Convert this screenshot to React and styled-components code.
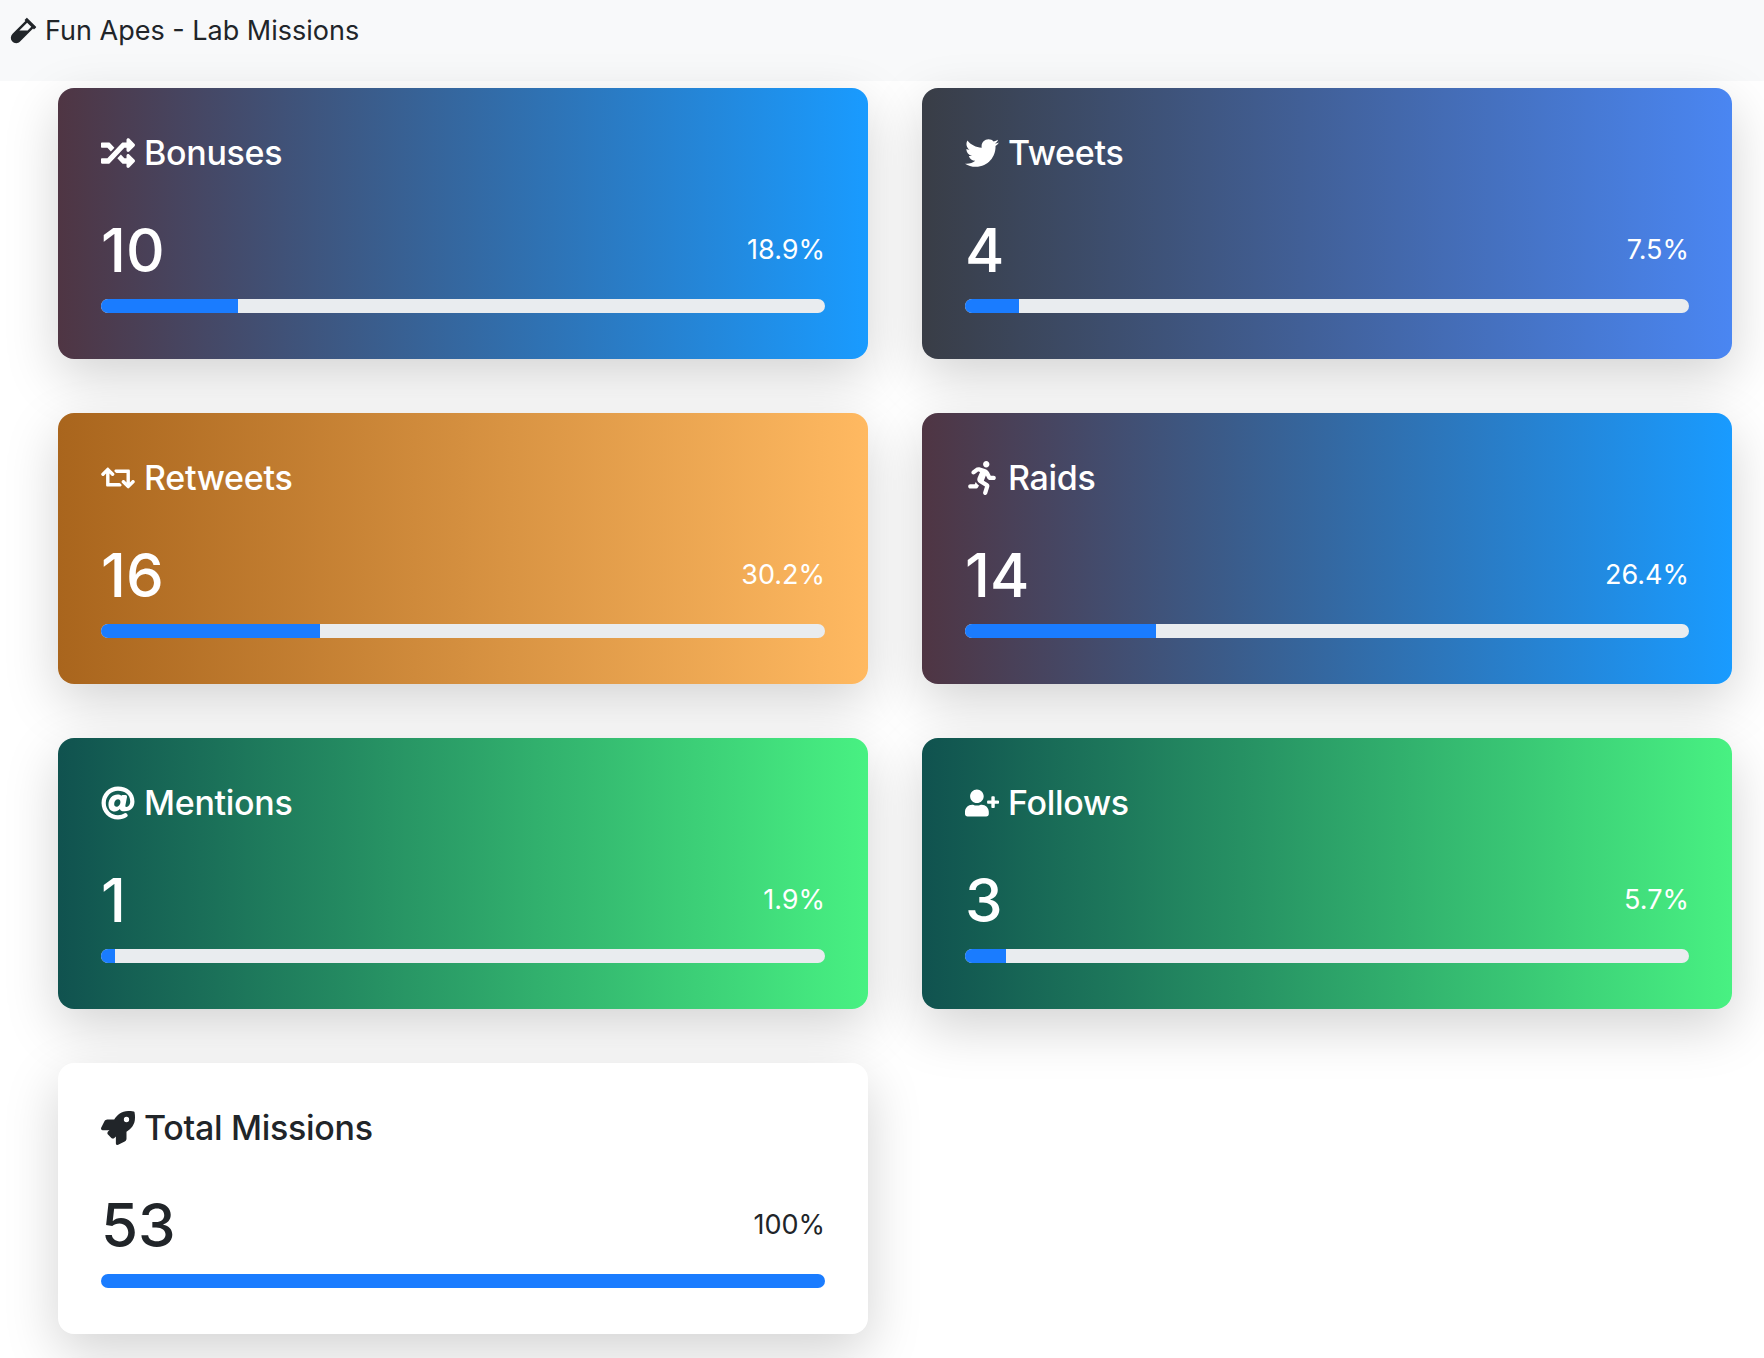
import styled, { createGlobalStyle } from 'styled-components';
import { FaVial, FaRandom, FaTwitter, FaRetweet, FaRunning, FaAt, FaUserPlus, FaRocket } from 'react-icons/fa';

const GRADIENTS = {
    blue: 'linear-gradient(90deg, #4f3543 0%, #199bff 100%)',
    twitter: 'linear-gradient(90deg, #393d46 0%, #4a86f2 100%)',
    orange: 'linear-gradient(90deg, #a9651d 0%, #ffb961 100%)',
    green: 'linear-gradient(90deg, #10524f 0%, #48f182 100%)',
    white: '#ffffff',
};

const missions = [
    { title: 'Bonuses', icon: FaRandom, count: 10, percent: 18.9, tone: 'blue' },
    { title: 'Tweets', icon: FaTwitter, count: 4, percent: 7.5, tone: 'twitter' },
    { title: 'Retweets', icon: FaRetweet, count: 16, percent: 30.2, tone: 'orange' },
    { title: 'Raids', icon: FaRunning, count: 14, percent: 26.4, tone: 'blue' },
    { title: 'Mentions', icon: FaAt, count: 1, percent: 1.9, tone: 'green' },
    { title: 'Follows', icon: FaUserPlus, count: 3, percent: 5.7, tone: 'green' },
    { title: 'Total Missions', icon: FaRocket, count: 53, percent: 100, tone: 'white' },
];

const App = () => {
    return (
        <Page>
            <GlobalStyle />
            <Navbar>
                <FaVial />
                <span>Fun Apes - Lab Missions</span>
            </Navbar>
            <Grid>
                {missions.map((mission) => (
                    <Card key={mission.title} $tone={mission.tone}>
                        <Title>
                            <mission.icon />
                            <span>{mission.title}</span>
                        </Title>
                        <StatRow>
                            <Count>{mission.count}</Count>
                            <Percent>{mission.percent}%</Percent>
                        </StatRow>
                        <Track>
                            <Fill style={{ width: `${mission.percent}%` }} />
                        </Track>
                    </Card>
                ))}
                {/* next row sits below the fold, only its shadow shows */}
                <Spacer />
                <Card $tone="white" />
            </Grid>
        </Page>
    );
};

const GlobalStyle = createGlobalStyle`
  html, body {
    margin: 0;
    padding: 0;
    height: 100%;
    overflow: hidden;
    background: #fff;
  }
  body {
    font-family: Inter, "Liberation Sans", sans-serif;
    color: #212529;
  }
`;

const Page = styled.div`
  height: 1358px;
  overflow: hidden;
`;

const Navbar = styled.nav`
  height: 81px;
  box-sizing: border-box;
  padding: 14px 10px 0;
  background: #f8f9fa;
  display: flex;
  align-items: flex-start;
  gap: 8px;
  font-size: 27px;
  line-height: 34px;
  font-size: 27px;
  color: #212529;

  svg {
    width: 27px;
    height: 27px;
    margin-top: 3px;
  }
`;

const Grid = styled.div`
  display: grid;
  grid-template-columns: 810px 810px;
  column-gap: 54px;
  row-gap: 54px;
  padding: 7px 0 0 58px;
`;

const Spacer = styled.div``;

const Card = styled.div`
  height: 271px;
  box-sizing: border-box;
  padding: 43px;
  border-radius: 16px;
  background: ${(p) => GRADIENTS[p.$tone]};
  color: ${(p) => (p.$tone === 'white' ? '#212529' : '#fff')};
  box-shadow: 0 18px 54px rgba(0, 0, 0, 0.175);
`;

const Title = styled.h5`
  margin: 0 0 39px;
  display: flex;
  align-items: center;
  gap: 9px;
  font-size: 34px;
  line-height: 44px;
  font-weight: 500;
  letter-spacing: -0.3px;

  svg {
    width: auto;
    height: 34px;
  }
`;

const StatRow = styled.div`
  display: flex;
  align-items: center;
  justify-content: space-between;
  margin-bottom: 13px;
`;

const Count = styled.div`
  font-size: 60px;
  line-height: 72px;
  font-weight: 500;
`;

const Percent = styled.div`
  font-size: 27px;
  line-height: 34px;
`;

const Track = styled.div`
  height: 14px;
  border-radius: 7px;
  background: #e9ecef;
  overflow: hidden;
`;

const Fill = styled.div`
  height: 100%;
  background: #1a7cff;
`;

export default App;
